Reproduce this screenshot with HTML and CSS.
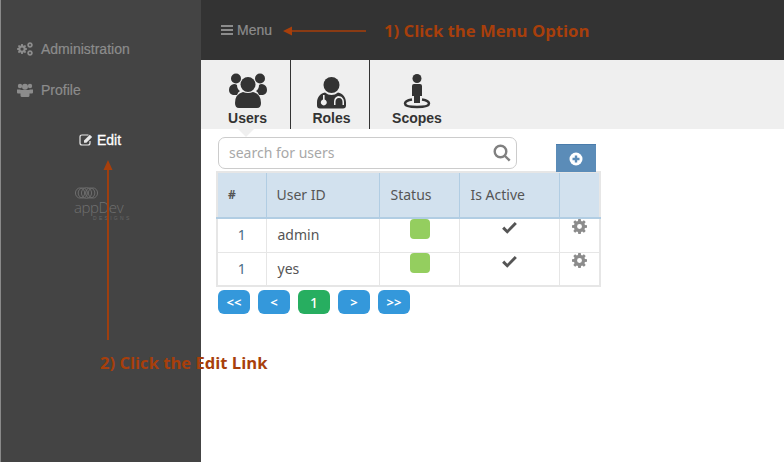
FILE: index.html
```html
<!DOCTYPE html>
<html lang="en">
<head>
<meta charset="utf-8">
<title>Users</title>
<link rel="stylesheet" href="styles.css">
</head>
<body>
<svg class="defs" width="0" height="0">
  <defs>
    <symbol id="gear" viewBox="0 0 16 16">
      <path fill-rule="evenodd" d="M6.7 0h2.6l.4 2.200 1.200.5L12.700 1.400l1.900 1.900-1.300 1.800.5 1.200 2.200.4v2.600l-2.200.4-.5 1.200 1.300 1.800-1.900 1.900-1.800-1.300-1.200.5-.4 2.200H6.700l-.4-2.200-1.200-.5-1.800 1.300-1.900-1.900 1.300-1.800-.5-1.200L0 9.300V6.700l2.200-.4.500-1.200L1.400 3.300l1.900-1.900 1.800 1.300 1.200-.5zM8 5.400a2.600 2.600 0 1 0 0 5.200 2.600 2.600 0 0 0 0-5.200z"/>
    </symbol>
    <symbol id="check" viewBox="0 0 16 13">
      <path d="M0 7.300 2.300 5l3.300 3.300L13.700 0 16 2.300 5.600 12.800z"/>
    </symbol>
  </defs>
</svg>
<div class="page">
  <aside class="sidebar">
    <nav class="side-nav">
      <a class="side-link">
        <svg class="side-icon" viewBox="0 0 16 14" width="16" height="14"><use href="#gear" x="0" y="2" width="10" height="10"/><use href="#gear" x="10" y="0" width="6" height="6"/><use href="#gear" x="10" y="8" width="6" height="6"/></svg>
        Administration
      </a>
      <a class="side-link">
        <svg class="side-icon" viewBox="0 0 16 14" width="16" height="14"><circle cx="3" cy="3" r="2.200"/><circle cx="13" cy="3" r="2.200"/><circle cx="8" cy="3.800" r="3"/><path d="M0 6.500h3.500v4H1q-1 0-1-1zM16 6.500h-3.500v4H15q1 0 1-1zM3.500 7h9v5.500q0 1.500-1.500 1.500H5q-1.500 0-1.500-1.500z"/></svg>
        Profile
      </a>
      <a class="edit-link">
        <svg class="edit-icon" viewBox="0 0 14 12" width="14" height="12"><path class="edit-box" d="M9.500 1H3Q1 1 1 3v6q0 2 2 2h6q2 0 2-2V7"/><path class="edit-pen" d="M5 6.500 10.800.7l2.400 2.300L7.400 8.800H5z"/></svg>
        Edit
      </a>
    </nav>
    <div class="logo">
      <svg class="logo-rings" viewBox="0 0 26 13" width="25" height="12"><ellipse cx="6" cy="6.500" rx="5" ry="5.500"/><ellipse cx="9" cy="6.500" rx="5" ry="5.500"/><ellipse cx="13" cy="6.500" rx="5.500" ry="5.800"/><ellipse cx="17" cy="6.500" rx="5" ry="5.500"/><ellipse cx="20" cy="6.500" rx="5" ry="5.500"/></svg>
      <div class="logo-name">appDev</div>
      <div class="logo-sub">DESIGNS</div>
    </div>
  </aside>
  <main class="main">
    <header class="topbar">
      <a class="menu-link">
        <span class="burger"><i></i><i></i><i></i></span>
        Menu
      </a>
    </header>
    <div class="tabs">
      <a class="tab tab-users">
        <svg class="tab-icon" viewBox="0 0 38 36" width="38" height="36"><circle cx="7" cy="5.500" r="5"/><circle cx="31" cy="5.500" r="5"/><path d="M0 17q0-5 5-6 2 0 3 1 0 4 3 6-2 1-3 4H4q-4-1-4-5zM38 17q0-5-5-6-2 0-3 1 0 4-3 6 2 1 3 4h4q4-1 4-5z"/><circle cx="19" cy="11.500" r="7.500"/><path d="M6 30q0-9 8-11 5 2 10 0 8 2 8 11 0 5-4 5H10q-4 0-4-5z"/></svg>
        <span>Users</span>
      </a>
      <a class="tab tab-roles">
        <svg class="tab-icon" viewBox="0 0 29 32" width="29" height="32"><circle cx="14.500" cy="8" r="8"/><path fill-rule="evenodd" d="M8 15.500q3 2.500 6.500 2.500T21 15.500c5 1 8 5 8 10v3q0 3-3 3H3q-3 0-3-3v-3c0-5 3-9 8-10zM6 18v4.500a3 3 0 1 0 1.600 0V18zM21 19c-3 1-4 3-4 6v3h1.500v-3c0-2 1-4 3.500-4s3.500 2 3.500 4v3H27v-3c0-3-2-6-6-6z"/></svg>
        <span>Roles</span>
      </a>
      <a class="tab tab-scopes">
        <svg class="tab-icon" viewBox="0 0 28 35" width="28" height="35"><circle cx="14" cy="4.500" r="4.500"/><path d="M9 12q0-2 2-2h6q2 0 2 2v10h-2v7h-6v-7H9z"/><path class="scope-ring" d="M9 25.500c-4 .7-7 2-7 4 0 2.500 5 3.500 12 3.500s12-1 12-3.500c0-2-3-3.300-7-4"/></svg>
        <span>Scopes</span>
      </a>
    </div>
    <div class="content">
      <span class="pointer"></span>
      <div class="search-row">
        <div class="search">
          <span class="search-text">search for users</span>
          <svg class="search-icon" viewBox="0 0 18 18" width="18" height="18"><circle cx="7.500" cy="7.500" r="5.800"/><path d="m12 12 4.700 4.700"/></svg>
        </div>
        <button class="add-btn" type="button" aria-label="Add">
          <svg viewBox="0 0 14 14" width="14" height="14"><circle cx="7" cy="7" r="6.500"/><path d="M7 3.500v7M3.500 7h7"/></svg>
        </button>
      </div>
      <table class="users">
        <thead>
          <tr><th class="c-num">#</th><th class="c-id">User ID</th><th class="c-status">Status</th><th class="c-active">Is Active</th><th class="c-gear"></th></tr>
        </thead>
        <tbody>
          <tr>
            <td class="num">1</td><td>admin</td>
            <td class="mid"><span class="status"></span></td>
            <td class="mid"><svg class="check" width="15" height="12"><use href="#check"/></svg></td>
            <td class="mid"><svg class="gear" width="15" height="15"><use href="#gear"/></svg></td>
          </tr>
          <tr>
            <td class="num">1</td><td>yes</td>
            <td class="mid"><span class="status"></span></td>
            <td class="mid"><svg class="check" width="15" height="12"><use href="#check"/></svg></td>
            <td class="mid"><svg class="gear" width="15" height="15"><use href="#gear"/></svg></td>
          </tr>
        </tbody>
      </table>
      <div class="pager">
        <a class="page-btn">&lt;&lt;</a>
        <a class="page-btn">&lt;</a>
        <a class="page-btn current">1</a>
        <a class="page-btn">&gt;</a>
        <a class="page-btn">&gt;&gt;</a>
      </div>
    </div>
  </main>
  <div class="note note-menu">
    <svg class="arrow-h" width="83" height="10" viewBox="0 0 83 10"><path d="M0 5 9 .5v3.700h74v1.600H9v3.700z"/></svg>
    <span>1) Click the Menu Option</span>
  </div>
  <svg class="arrow-v" width="10" height="180" viewBox="0 0 10 180"><path d="M5 0l4.500 10H5.900v170H4.100V10H.5z"/></svg>
  <div class="note note-edit">2) Click the Edit Link</div>
</div>
</body>
</html>
```

FILE: styles.css
```css
* { box-sizing: border-box; }
html, body { margin: 0; height: 100%; }
body { background: #fff; font-family: "Liberation Sans", Arial, sans-serif; overflow: hidden; }
.defs { position: absolute; }
.page { position: relative; display: flex; width: 784px; height: 462px; overflow: hidden; }

.sidebar { flex: 0 0 201px; background: #444; border-left: 1px solid #8a8a8a; padding-top: 38px; color: #8c8c8c; }
.side-nav { display: flex; flex-direction: column; }
.side-link { display: flex; align-items: center; gap: 8px; height: 22px; margin-bottom: 19px; padding-left: 16px; font-size: 14px; -webkit-text-stroke: .2px #8c8c8c; }
.side-icon { fill: #8c8c8c; }
.edit-link { display: flex; align-items: center; gap: 4px; height: 20px; margin: 10px 0 0 78px; color: #fff; font-size: 14px; font-weight: 400; -webkit-text-stroke: .3px #fff; }
.edit-icon { flex: none; }
.edit-box { fill: none; stroke: #e8e8e8; stroke-width: 1.200; }
.edit-pen { fill: #e8e8e8; }
.logo { margin: 37px 0 0 73px; color: #707070; line-height: 1; }
.logo-rings { display: block; fill: none; stroke: #707070; stroke-width: 1; margin-bottom: 1px; }
.logo-name { font-family: "Open Sans", sans-serif; font-size: 15px; font-weight: 300; line-height: 15px; letter-spacing: -.4px; }
.logo-sub { margin: 1px 0 0 19px; font-size: 5px; line-height: 5px; letter-spacing: 2.300px; color: #666; }

.main { flex: 1; display: flex; flex-direction: column; min-width: 0; }
.topbar { flex: 0 0 60px; display: flex; align-items: center; background: #333; padding-left: 20px; }
.menu-link { display: flex; align-items: center; gap: 4px; color: #8c8c8c; font-size: 14px; -webkit-text-stroke: .2px #8c8c8c; }
.burger { display: flex; flex-direction: column; gap: 2px; width: 12px; }
.burger i { display: block; height: 2px; background: #8c8c8c; }

.tabs { flex: 0 0 69px; display: flex; background: #efefef; }
.tab { display: flex; flex-direction: column; align-items: center; justify-content: flex-end; color: #333; font-size: 14px; font-weight: 700; padding-bottom: 3px; border-right: 1px solid #333; }
.tab span { line-height: 16px; margin-top: 1px; }
.tab-icon { fill: #333; display: block; }
.tab-users { width: 90px; padding-left: 4px; }
.tab-roles { width: 79px; padding-left: 3px; }
.tab-scopes { width: 94px; border-right: 0; }
.scope-ring { fill: none; stroke: #333; stroke-width: 2.500; }

.content { position: relative; flex: 1; padding: 8px 0 0 15px; }
.pointer { position: absolute; left: 37px; top: 0; width: 0; height: 0; border: 8px solid transparent; border-top-color: #efefef; border-bottom: 0; }
.search-row { display: flex; align-items: flex-start; padding-left: 2px; }
.search { display: flex; align-items: center; justify-content: space-between; width: 299px; height: 32px; padding: 0 5px 0 10px; background: #fff; border: 1px solid #ccc; border-radius: 7px; color: #a8a8a8; font-family: "Noto Sans", sans-serif; font-size: 14px; }
.search-text { margin-top: -2px; }
.search-icon { fill: none; stroke: #808080; stroke-width: 2.400; }
.add-btn { display: flex; align-items: center; justify-content: center; width: 40px; height: 28px; margin: 7px 0 0 39px; padding: 0; border: 0; border-top: 1px solid #4a7cab; background: #5b8cb8; }
.add-btn circle { fill: #fff; }
.add-btn path { stroke: #5b8cb8; stroke-width: 2.400; fill: none; }

.users { width: 385px; table-layout: fixed; border-collapse: collapse; margin-top: -1px; border: 2px solid #e6e6e6; color: #555; font-family: "Noto Sans", sans-serif; font-size: 14px; }
.users th { height: 46px; background: #d2e1ee; border-left: 1px solid #b1cde3; border-right: 1px solid #b1cde3; border-bottom: 2px solid #b1cde3; font-weight: 400; text-align: left; padding: 0 11px 2px; }
.users th:first-child { border-left: 0; }
.users th:last-child { border-right: 0; }
.users .c-num { width: 49px; padding-left: 10px; font-weight: 700; font-size: 12px; }
.users .c-id { width: 113px; padding-left: 10px; }
.users .c-status { width: 80px; }
.users .c-active { width: 100px; }
.users td { height: 34px; border: 1px solid #e6e6e6; padding: 0 11px 1px; vertical-align: middle; }
.users td.num { text-align: center; color: #4a6a85; padding: 0 0 1px; }
.users td.mid { text-align: center; vertical-align: top; padding: 0 0 0 1px; }
.status { display: block; width: 20px; height: 20px; margin: 0 auto; background: #94ce5f; border-radius: 4px; }
.check { display: block; margin: 3px auto 0; fill: #555; }
.gear { display: block; margin: 0 auto; fill: #8c8c8c; }

.pager { display: flex; gap: 8px; margin: 3px 0 0 2px; }
.page-btn { display: flex; align-items: center; justify-content: center; width: 32px; height: 24px; background: #3498db; border-radius: 6px; color: #fff; font-family: "Noto Sans", sans-serif; font-size: 13px; font-weight: 700; }
.page-btn.current { background: #27ae60; font-size: 14px; font-weight: 500; }

.note { color: #a83f0b; font-family: "Open Sans", sans-serif; font-size: 16.700px; font-weight: 700; white-space: nowrap; }
.note-menu { position: absolute; left: 283px; top: 19px; display: flex; align-items: center; gap: 18px; }
.note-edit { position: absolute; left: 100px; top: 351px; font-size: 16.600px; }
.arrow-h { fill: #a83f0b; flex: none; }
.arrow-v { position: absolute; left: 103px; top: 160px; fill: #a83f0b; }
```
